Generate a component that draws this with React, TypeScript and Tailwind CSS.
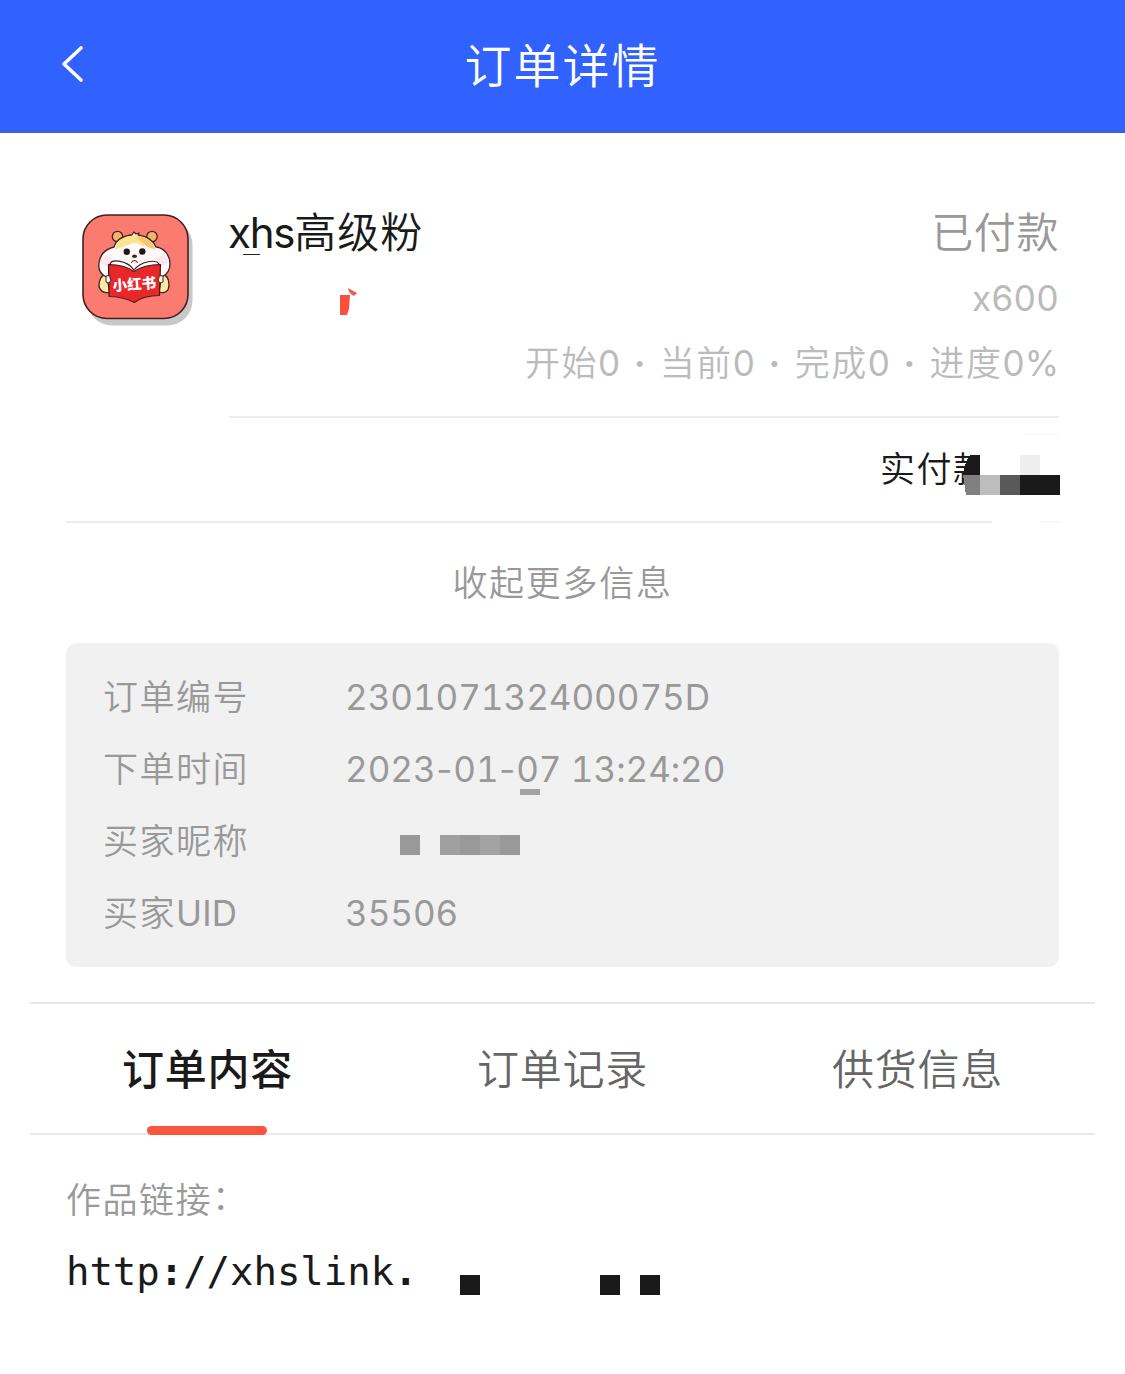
import React from "react";

const tabs = ["订单内容", "订单记录", "供货信息"];

function Mascot() {
  return (
    <svg viewBox="0 0 135 135" className="h-[135px] w-[135px]">
      <rect x="17" y="20" width="105.500" height="105.500" rx="25" fill="#c8c8ca" />
      <rect x="13" y="15" width="105" height="103.500" rx="24" fill="#fc7b70" stroke="#40201f" strokeWidth="1.6" />
      <g stroke="#3f2625" strokeWidth="1.3" strokeLinejoin="round" strokeLinecap="round">
        <path d="M36 74c-5 1-7 7-7 11 0 5 4 9 11 7zM92 74c5 1 7 6 7 11 0 6-4 9-10 7z" fill="#ffe9a5" />
        <circle cx="47.500" cy="36.500" r="5.200" fill="#f7b268" />
        <circle cx="82" cy="36.500" r="5.200" fill="#f7b268" />
        <path d="M44 47c2-7 9-11 18-12l2-3 2 2 3-1-1 2c8 1 15 5 18 12 9 1 14 9 14 17s-4 11-8 13H37c-6-2-9-7-8-14 1-9 7-14 15-16z" fill="#fffafa" />
      </g>
      <path d="M45 49c2-8 8-13 19-13.500 5 0 7 2.500 9 6.500 3 4 1 6-4 2-8-4-15 5-24 5z" fill="#fbe48c" />
      <path d="M66 36c10 0 17 6 19 13-6 0-11-4-19-13z" fill="#fac66c" />
      <ellipse cx="37" cy="61" rx="6" ry="5" fill="#ffe7f0" />
      <ellipse cx="92" cy="61" rx="6" ry="5" fill="#ffe7f0" />
      <circle cx="56.800" cy="51.800" r="3.200" fill="#211719" />
      <circle cx="72.300" cy="51.500" r="3.200" fill="#211719" />
      <ellipse cx="64.500" cy="56.200" rx="2.500" ry="1.800" fill="#3f2825" />
      <path d="M61.500 62.500q3-4 6 0" fill="none" stroke="#6b3330" strokeWidth="1.1" strokeLinecap="round" />
      <g stroke="#3f1c1d" strokeWidth="1.2" strokeLinejoin="round">
        <path d="M40 64c2-5 17-4 24 6 7-9 22-11 25-6l-1 9-24 5-24-7z" fill="#fff" />
        <path d="M38.500 64.500q16 0 25.500 7 10-7 26.500-7l-1 31q-16 0-25 7-12-6-25.500-6z" fill="#e9262a" />
        <path d="M36 76q5-1 4 2 2 2 0 4-2 2-4 0zM93 76q-5-1-4 2-2 2 0 4 2 2 4 0z" fill="#fff" strokeWidth="1" />
      </g>
      <text x="64.500" y="89.500" fill="#fff" fontSize="14.500" fontWeight="900" letterSpacing="0" textAnchor="middle" transform="rotate(-4 64.500 86)" fontFamily="Noto Sans CJK SC, sans-serif">小红书</text>
    </svg>
  );
}

function InfoRow({ label, children }: { label: React.ReactNode; children?: React.ReactNode }) {
  return (
    <div className="flex h-[72px] items-center">
      <dt className="w-[242px] shrink-0">{label}</dt>
      <dd className="relative h-[72px] flex-1 font-normal tabular-nums leading-[72px] tracking-[-0.05px]">{children}</dd>
    </div>
  );
}

function Zero() {
  return <span className="font-normal tracking-[0.8px]">0</span>;
}

function Dot() {
  return <span className="font-bold"> · </span>;
}

export default function App() {
  return (
    <main className="h-[1374px] w-[1125px] overflow-hidden bg-white font-['Inter','Noto_Sans_CJK_SC',sans-serif] text-[35px] font-[350] tracking-[1.5px] text-[#999]">
      <header className="relative flex h-[133px] items-center justify-center border-b-2 border-[#4064cf] bg-[#3162ff] text-white">
        <svg viewBox="0 0 24 40" className="absolute left-[60px] top-[44px] h-10 w-6" fill="none" stroke="currentColor" strokeWidth="3.6" strokeLinecap="round" strokeLinejoin="round">
          <path d="M21 4 4 20l17 16" />
        </svg>
        <h1 className="pt-0.5 text-[47px] font-[350] tracking-[2px]">订单详情</h1>
      </header>

      <section className="px-[66px] pt-[67px]">
        <div className="flex h-[216px]">
          <div className="ml-1 w-[158px] shrink-0"><Mascot /></div>
          <div className="relative flex flex-1 justify-between">
            <h2 className="h-[66px] text-[42px] font-[350] leading-[66px] tracking-[0.9px] text-[#1a1a1a]"><span className="font-normal tracking-[-1.2px]">xhs</span>高级粉</h2>
            <svg viewBox="0 0 18 29" className="absolute left-[112px] top-[87px] h-[29px] w-[18px]">
              <path d="M0 8h10l-1 14-2 6H0z" fill="#fa503c" />
              <path d="M8 1l9 5-3 3q-5-2-6-8" fill="#e95f50" />
            </svg>
            <span className="absolute left-[15px] top-[53.5px] h-[1.500px] w-[17px] rounded-full bg-[#222]" />
            <div className="text-right">
              <p className="h-[66px] text-[42px] leading-[66px] tracking-[0.6px]">已付款</p>
              <p className="h-[65px] font-normal leading-[65px] tracking-[0.5px] text-[#bbb]">x600</p>
              <p className="h-[65px] whitespace-nowrap leading-[65px] text-[#bbb] [word-spacing:3.1px]">开始<Zero /><Dot />当前<Zero /><Dot />完成<Zero /><Dot />进度<span className="font-normal tracking-[0px]">0%</span></p>
            </div>
          </div>
        </div>
        <div className="ml-[163px] h-0.5 bg-[#eee]" />
        <div className="relative h-[103px] pl-[814px] text-[#1a1a1a]">
          <p className="h-[103px] whitespace-nowrap leading-[103px]">实付款</p>
          <svg viewBox="0 -10 97 52" className="absolute left-[897px] top-[26px] h-[52px] w-[97px]" shapeRendering="crispEdges">
            <path d="M7-10h90v52H17V1H7z" fill="#fff" />
            <path d="M7 1h10v20H0q1-11 7-20" fill="#1a1a1a" />
            <path d="M0 21h17v20H3z" fill="#808080" />
            <path d="M17 21h20v20H17z" fill="#bdbdbd" />
            <path d="M37 21h20v20H37z" fill="#595959" />
            <path d="M57 21h40v20H57z" fill="#1a1a1a" />
            <path d="M57 1h20v20H57z" fill="#eee" />
          </svg>
          <span className="absolute right-0 top-[15px] h-0.5 w-9 bg-[#fafafa]" />
        </div>
        <div className="flex h-0.5 justify-between">
          <span className="w-[926px] bg-[#eee]" />
          <span className="w-[18px] bg-[#f8f8f8]" />
        </div>
        <button className="block h-[120px] w-full text-center leading-[119px] tracking-[1.7px]">收起更多信息</button>
        <dl className="h-[324px] rounded-[10px] bg-[#f1f1f1] pl-[37px] pt-[18px]">
          <InfoRow label="订单编号">230107132400075D</InfoRow>
          <InfoRow label="下单时间">
            2023<span className="mx-[-2.5px]">-</span>01<span className="mx-[-2.5px]">-</span>07 13:24:20
            <span className="absolute left-[175px] top-[56px] h-1.5 w-5 bg-[#a3a3a3]" />
          </InfoRow>
          <InfoRow label="买家昵称">
            <span className="flex pl-[55px] pt-[30px]">
              <span className="mr-5 h-5 w-5 bg-[#999]" />
              <span className="h-5 w-5 bg-[#a0a0a0]" />
              <span className="h-5 w-5 bg-[#999]" />
              <span className="h-5 w-5 bg-[#a3a3a3]" />
              <span className="h-5 w-5 bg-[#999]" />
            </span>
          </InfoRow>
          <InfoRow label={<>买家<span className="font-normal tracking-[0.2px]">UID</span></>}>35506</InfoRow>
        </dl>
      </section>

      <nav className="mx-[30px] mt-[35px] grid h-[133px] grid-cols-3 border-y-2 border-[#e9e9e9] text-[42px] tracking-[0.7px] text-[#666]">
        {tabs.map((tab, i) => (
          <button key={tab} className={i === 0 ? "relative h-[129px] pt-0.5 font-medium text-[#1a1a1a]" : "h-[129px] pt-0.5"}>
            {tab}
            {i === 0 && <span className="absolute bottom-[-2px] left-[117px] h-[9px] w-[120px] rounded-full bg-[#fa563f]" />}
          </button>
        ))}
      </nav>

      <section className="px-[66px] pt-[30px]">
        <p className="h-[71px] leading-[71px]">作品链接<span className="inline-block -translate-y-[3px]">：</span></p>
        <div className="relative h-[72px]">
          <p className="font-['DejaVu_Sans_Mono',monospace] text-[39px] leading-[72px] tracking-[-0.05px] text-[#1a1a1a]">http<b>:</b>//xhslink<b>.</b></p>
          <span className="absolute left-[394px] top-[39px] h-5 w-5 bg-[#1a1a1a]" />
          <span className="absolute left-[534px] top-[39px] h-5 w-5 bg-[#1a1a1a]" />
          <span className="absolute left-[574px] top-[39px] h-5 w-5 bg-[#1a1a1a]" />
        </div>
      </section>
    </main>
  );
}
